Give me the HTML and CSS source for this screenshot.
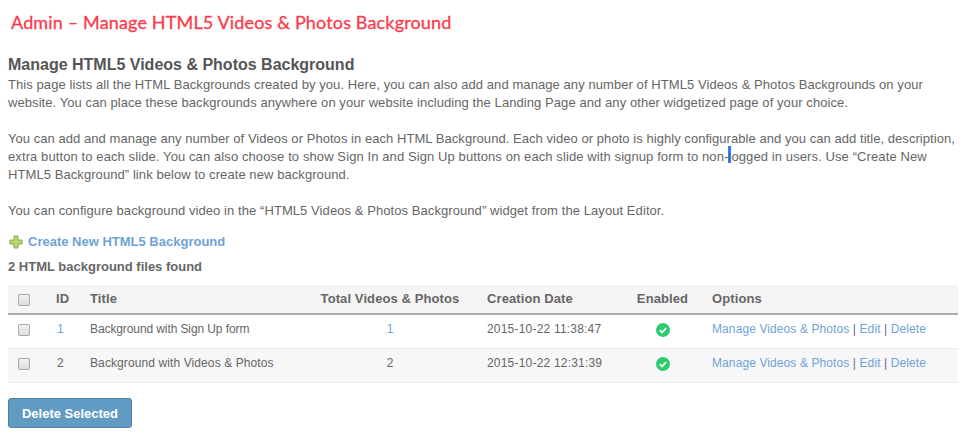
FILE: index.html
```html
<!DOCTYPE html>
<html lang="en">
<head>
    <meta charset="UTF-8">
    <title>Admin - Manage HTML5 Videos &amp; Photos Background</title>
    <link rel="stylesheet" href="styles.css">
</head>
<body>
    <h1 class="page-title">Admin – Manage HTML5 Videos &amp; Photos Background</h1>

    <h2 class="section-title">Manage HTML5 Videos &amp; Photos Background</h2>
    <p class="intro">This page lists all the HTML Backgrounds created by you. Here, you can also add and manage any number of HTML5 Videos &amp; Photos Backgrounds on your<br>
    website. You can place these backgrounds anywhere on your website including the Landing Page and any other widgetized page of your choice.<br><br>
    <span class="line-tight">You can add and manage any number of Videos or Photos in each HTML Background. Each video or photo is highly configurable and you can add title, description,</span><br>
    <span class="line-wide">extra button to each slide. You can also choose to show Sign In and Sign Up buttons on each slide with signup form to non-<span class="text-cursor"></span>logged in users. Use “Create New</span><br>
    HTML5 Background” link below to create new background.<br><br>
    You can configure background video in the “HTML5 Videos &amp; Photos Background” widget from the Layout Editor.</p>

    <a class="create-link" href="#">
        <svg width="14" height="14" viewBox="0 0 14 14"><path d="M5 1h4v4h4v4H9v4H5V9H1V5h4z" fill="#b5dc6c" stroke="#86a94a"/></svg>
        Create New HTML5 Background
    </a>

    <p class="count">2 HTML background files found</p>

    <table class="bg-table">
        <thead>
            <tr>
                <th class="col-check"><span class="check"></span></th>
                <th class="col-id">ID</th>
                <th class="col-title">Title</th>
                <th class="col-total">Total Videos &amp; Photos</th>
                <th class="col-date">Creation Date</th>
                <th class="col-enabled">Enabled</th>
                <th class="col-options">Options</th>
            </tr>
        </thead>
        <tbody>
            <tr>
                <td class="col-check"><span class="check"></span></td>
                <td class="col-id"><a href="#">1</a></td>
                <td class="col-title">Background with Sign Up form</td>
                <td class="col-total"><a href="#">1</a></td>
                <td class="col-date">2015-10-22 11:38:47</td>
                <td class="col-enabled"><svg class="tick" width="14" height="14" viewBox="0 0 14 14"><circle cx="7" cy="7" r="7" fill="#2ecc71"/><path d="M3.8 7.2l2.2 2.2 4.2-4.2" fill="none" stroke="#fff" stroke-width="1.8"/></svg></td>
                <td class="col-options"><a href="#">Manage Videos &amp; Photos</a> | <a href="#">Edit</a> | <a href="#">Delete</a></td>
            </tr>
            <tr>
                <td class="col-check"><span class="check"></span></td>
                <td class="col-id">2</td>
                <td class="col-title">Background with Videos &amp; Photos</td>
                <td class="col-total">2</td>
                <td class="col-date">2015-10-22 12:31:39</td>
                <td class="col-enabled"><svg class="tick" width="14" height="14" viewBox="0 0 14 14"><circle cx="7" cy="7" r="7" fill="#2ecc71"/><path d="M3.8 7.2l2.2 2.2 4.2-4.2" fill="none" stroke="#fff" stroke-width="1.8"/></svg></td>
                <td class="col-options"><a href="#">Manage Videos &amp; Photos</a> | <a href="#">Edit</a> | <a href="#">Delete</a></td>
            </tr>
        </tbody>
    </table>

    <button class="delete-btn" type="button">Delete Selected</button>
</body>
</html>
```

FILE: styles.css
```css
body {
    margin: 0;
    padding: 0 8px;
    font-family: "Liberation Sans", Arial, sans-serif;
    font-size: 13px;
    line-height: 18px;
    color: #666;
    background: #fff;
    overflow: hidden;
}

a {
    color: #6ea3d6;
    text-decoration: none;
}

.page-title {
    margin: 0;
    padding: 10px 0 0 3px;
    height: 44px;
    font-family: "Lato", sans-serif;
    font-size: 18px;
    line-height: 24px;
    font-weight: 400;
    letter-spacing: 0.15px;
    color: #fb3a4c;
    -webkit-text-stroke: 0.3px #fb3a4c;
}

.section-title {
    margin: 0;
    font-size: 16px;
    line-height: 22px;
    font-weight: bold;
    color: #555;
}

.intro {
    margin: 0;
    letter-spacing: 0.075px;
}

.line-tight {
    letter-spacing: 0.05px;
}

.line-wide {
    letter-spacing: 0.1px;
}

.text-cursor {
    display: inline-block;
    width: 3px;
    height: 17px;
    margin: -4px -3px 0 0;
    vertical-align: -2px;
    background: #2b7fff;
}

.create-link {
    display: flex;
    align-items: center;
    gap: 5px;
    margin-top: 12px;
    height: 20px;
    font-weight: bold;
}

.create-link svg {
    margin-left: 1px;
}

.count {
    margin: 5px 0 8px;
    font-weight: bold;
    line-height: 20px;
}

.bg-table {
    width: 950px;
    border-collapse: collapse;
    table-layout: fixed;
    font-size: 12px;
}

.bg-table th {
    height: 28px;
    padding: 0;
    font-size: 13px;
    letter-spacing: 0.1px;
    text-align: left;
    background: #f5f5f5;
    border-bottom: 2px solid #aaa;
}

.bg-table td {
    height: 28px;
    padding: 0 0 5px;
    border-bottom: 1px solid #eaeaea;
}

.bg-table tbody tr:nth-child(2) td {
    background: #f7f7f7;
}

.bg-table .col-check { width: 32px; text-align: center; }
.bg-table .col-id { width: 50px; box-sizing: border-box; }
.bg-table th.col-id { padding-left: 16px; }
.bg-table td.col-id { padding-left: 17px; }
.bg-table .col-title { width: 203px; }
.bg-table td.col-title { letter-spacing: -0.1px; }
.bg-table tbody tr:nth-child(2) td.col-title { letter-spacing: 0.1px; }
.bg-table .col-total { width: 194px; text-align: center; }
.bg-table .col-date { width: 126px; }
.bg-table td.col-date { letter-spacing: 0.2px; }
.bg-table .col-enabled { width: 99px; text-align: center; }
.bg-table td.col-options { letter-spacing: 0.1px; color: #6f5f92; }

.check {
    display: inline-block;
    width: 10px;
    height: 10px;
    border: 1px solid #a9a9a9;
    border-radius: 2px;
    background: linear-gradient(#f2f2f2, #dcdcdc);
    vertical-align: middle;
}

.tick {
    vertical-align: middle;
}

.delete-btn {
    display: block;
    margin-top: 15px;
    width: 124px;
    height: 30px;
    padding: 0;
    font-family: inherit;
    font-size: 13px;
    font-weight: bold;
    color: #fff;
    background: #619ac3;
    border: 1px solid #50829f;
    border-radius: 3px;
}
```
